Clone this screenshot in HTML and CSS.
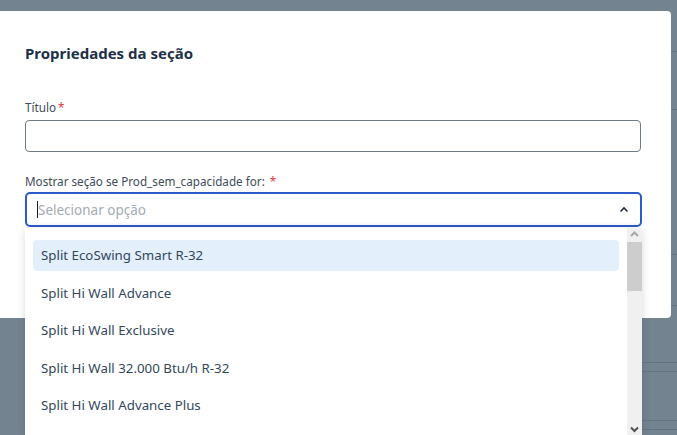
FILE: index.html
```html
<!DOCTYPE html>
<html lang="pt">
<head>
<meta charset="utf-8">
<title>Propriedades da seção</title>
<link rel="stylesheet" href="styles.css">
</head>
<body>
<div class="modal">
  <h2 class="modal-title">Propriedades da seção</h2>
  <div class="field">
    <label class="label">Título<span class="req">*</span></label>
    <div class="input"></div>
  </div>
  <div class="field field-select">
    <label class="label">Mostrar seção se Prod_sem_capacidade for: <span class="req">*</span></label>
    <div class="select">
      <span class="caret"></span>
      <span class="placeholder">Selecionar opção</span>
      <svg class="chev" width="10" height="7" viewBox="0 0 10 7"><path d="M1.5 5.5 L5 2 L8.5 5.5" fill="none" stroke="#1f2d3d" stroke-width="1.6"/></svg>
    </div>
  </div>
</div>

<div class="dropdown">
  <ul class="options">
    <li class="option active">Split EcoSwing Smart R-32</li>
    <li class="option">Split Hi Wall Advance</li>
    <li class="option">Split Hi Wall Exclusive</li>
    <li class="option">Split Hi Wall 32.000 Btu/h R-32</li>
    <li class="option">Split Hi Wall Advance Plus</li>
  </ul>
  <div class="scrollbar">
    <svg class="sb-arrow" width="15" height="12" viewBox="0 0 15 12"><path d="M4 8 L7.5 4.5 L11 8" fill="none" stroke="#a8a8a8" stroke-width="2"/></svg>
    <div class="sb-track"><div class="sb-thumb"></div></div>
    <svg class="sb-arrow" width="15" height="12" viewBox="0 0 15 12"><path d="M4 4.5 L7.5 8 L11 4.5" fill="none" stroke="#505050" stroke-width="2"/></svg>
  </div>
</div>
</body>
</html>
```

FILE: styles.css
```css
* { box-sizing: border-box; }
html, body { margin: 0; padding: 0; height: 100%; overflow: hidden; }
body {
  width: 677px;
  height: 435px;
  position: relative;
  font-family: "Noto Sans", "Open Sans", sans-serif;
  background-color: #738390;
  background-image:
    linear-gradient(#66747f, #66747f),
    linear-gradient(#66747f, #66747f),
    linear-gradient(#66747f, #66747f),
    linear-gradient(#66747f, #66747f),
    linear-gradient(#66747f, #66747f),
    linear-gradient(#66747f, #66747f),
    linear-gradient(#66747f, #66747f),
    linear-gradient(#66747f, #66747f);
  background-repeat: no-repeat;
  background-size: 6px 1px, 6px 1px, 6px 1px, 6px 1px, 35px 1px, 35px 1px, 35px 1px, 35px 1px;
  background-position: 671px 51px, 671px 109px, 671px 254px, 671px 305px, 642px 362px, 642px 371px, 642px 420px, 642px 429px;
}

.modal {
  margin-top: 11px;
  width: 671px;
  height: 307px;
  background: #fff;
  border-radius: 0 4px 4px 0;
  padding: 32px 30px 0 25px;
}

.modal-title {
  margin: 0 0 36px;
  font-size: 15px;
  line-height: 20px;
  font-weight: 700;
  color: #1c3048;
}

.field { display: flex; flex-direction: column; }
.field + .field { margin-top: 21px; }

.label {
  font-size: 11.7px;
  line-height: 16px;
  color: #3e4c5a;
  margin-bottom: 5px;
}
.field-select .label { margin-bottom: 3px; }
.req { color: #e0383e; margin-left: 2px; }

.input {
  height: 32px;
  border: 1px solid #6f7b86;
  border-radius: 4px;
}

.select {
  height: 35px;
  width: 617px;
  border: 2px solid #2b5bc8;
  border-radius: 5px;
  display: flex;
  align-items: center;
  padding: 0 11px 0 10px;
  box-shadow: inset 0 -6px 6px -6px rgba(0,0,0,0.05);
}
.caret {
  width: 1px;
  height: 17px;
  background: #1a1a1a;
}
.placeholder {
  font-size: 13.5px;
  color: #a3abb3;
  flex: 1;
}
.chev { display: block; }

.dropdown {
  position: absolute;
  left: 25px;
  top: 228px;
  width: 617px;
  height: 207px;
  background: #fff;
  display: flex;
  box-shadow: 0 2px 8px rgba(30, 45, 60, 0.18);
}
.options {
  list-style: none;
  margin: 0;
  padding: 12px 8px 0 8px;
  flex: 1;
}
.option {
  height: 31px;
  line-height: 31px;
  padding-left: 8px;
  margin-bottom: 6.5px;
  font-size: 13.3px;
  color: #33475b;
  border-radius: 4px;
}
.option.active { background: #e3effb; }

.scrollbar {
  width: 15px;
  background: #f0f0f0;
  display: flex;
  flex-direction: column;
  height: 207px;
}
.sb-arrow { display: block; flex: none; }
.sb-track { flex: 1; }
.sb-thumb {
  height: 49px;
  margin-top: 2px;
  background: #cdcdcd;
}
```
